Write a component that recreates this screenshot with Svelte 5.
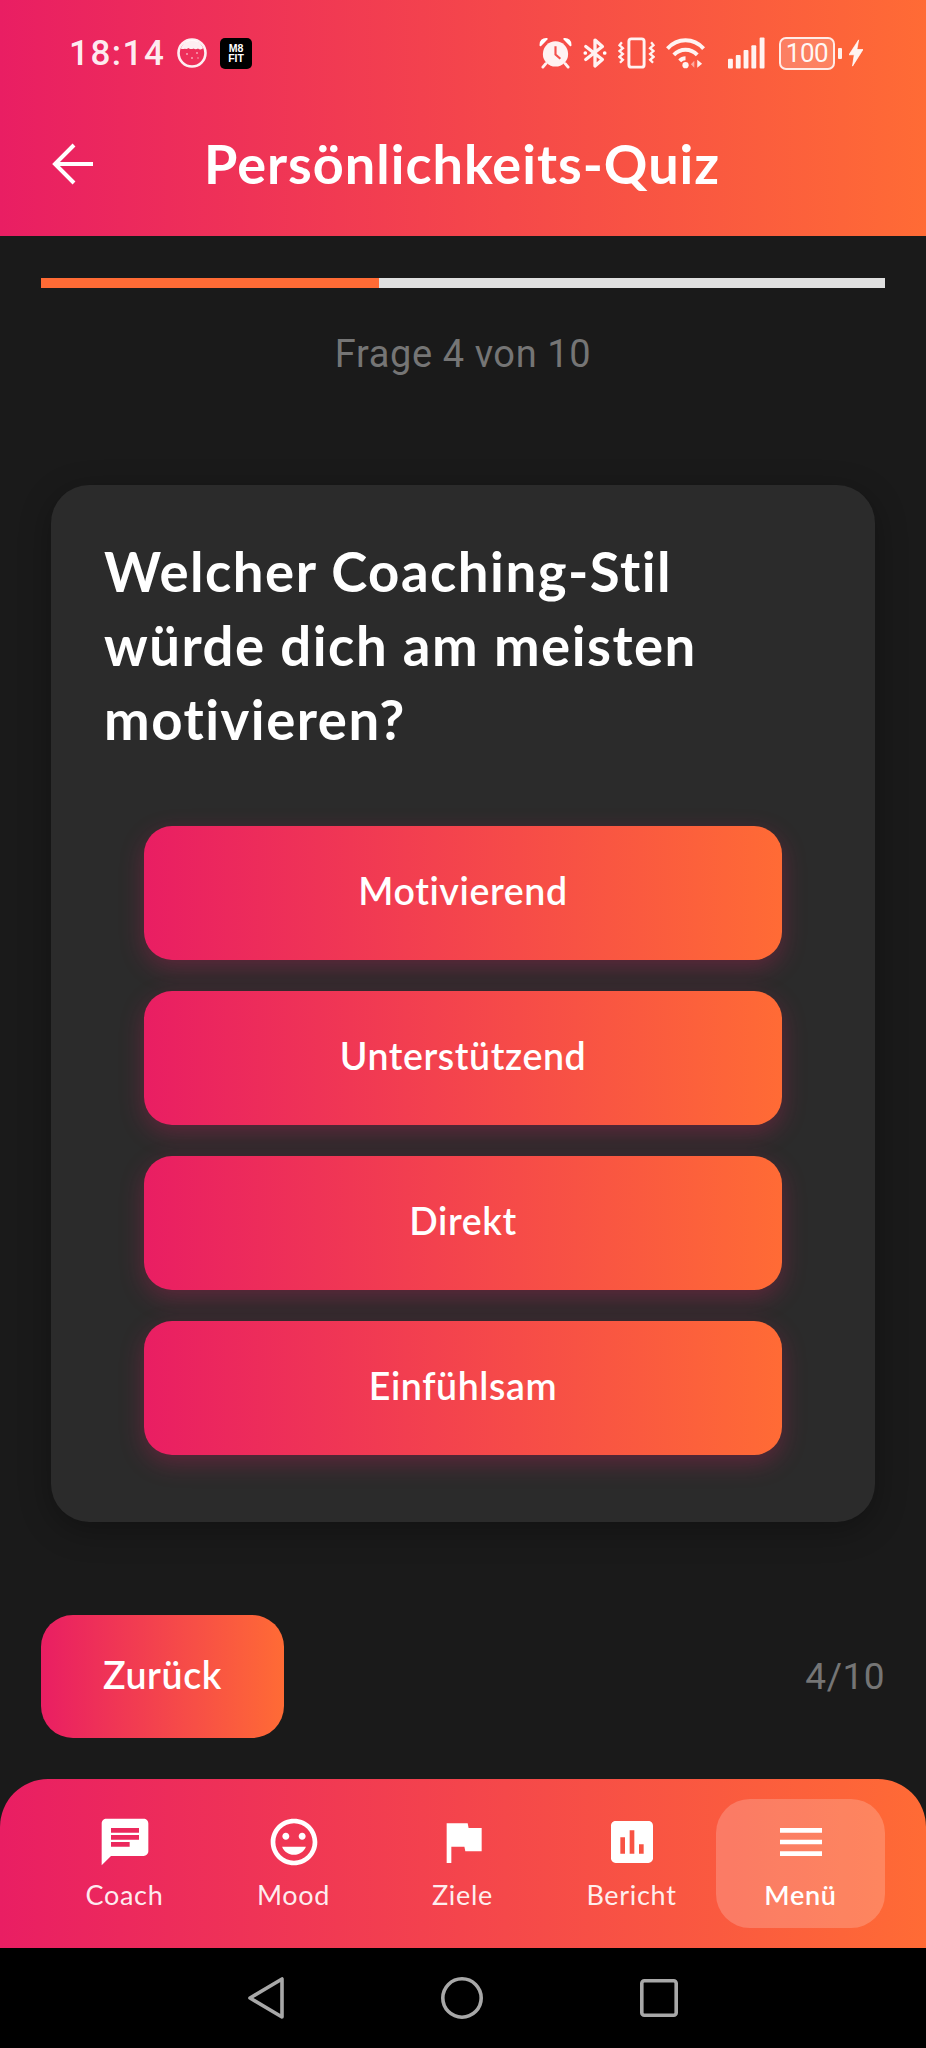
<script>
  const options = ['Motivierend', 'Unterstützend', 'Direkt', 'Einfühlsam'];
  const progress = 40;
</script>

<div class="screen">
  <header class="header">
    <div class="status">
      <div class="status-left">
        <span class="time">18:14</span>
        <svg class="ic-straw" viewBox="0 0 30 30"><circle cx="15" cy="15" r="13.500" fill="none" stroke="#fff" stroke-opacity=".92" stroke-width="2.600"/><path d="M4 10C6 5 10 2 15 2s9 3 11 8c-1.500 2-3.500 1.500-5 .5-1.500 1-3 1-4.500 0-2 1-4 .5-5-.5-1.500 1-2.500 1.500-3.500.5-.5.5-2 1-4.500 0z" fill="#fff" fill-opacity=".92"/><g fill="#fff" fill-opacity=".55"><circle cx="10" cy="16" r="1"/><circle cx="20" cy="15" r="1"/><circle cx="15" cy="20" r="1"/><circle cx="21" cy="20" r=".8"/></g></svg>
        <span class="m8"><span>M8</span><span>FIT</span></span>
      </div>
      <div class="status-right">
        <svg class="s-alarm" viewBox="0 0 34 32"><circle cx="17" cy="17" r="13" fill="#fff" fill-opacity=".93"/><path d="M17 9v8.500l5 4.500" fill="none" stroke="#f4504c" stroke-width="2.200"/><path d="M1.500 8 8 1.500C4 1.200 1 4 1.500 8zM32.500 8 26 1.500c4-.3 7 2.500 6.500 6.500z" fill="#fff" fill-opacity=".93" stroke="#fff" stroke-width="2" stroke-linejoin="round"/><path d="M7 27l-3 3.500M27 27l3 3.500" stroke="#fff" stroke-opacity=".93" stroke-width="3" stroke-linecap="round"/></svg>
        <svg class="s-bt" viewBox="0 0 26 32"><path d="M3 9l18 14-8 7V2l8 7L3 23" fill="none" stroke="#fff" stroke-opacity=".93" stroke-width="3.600" stroke-linejoin="round" stroke-linecap="round"/><circle cx="2.500" cy="16" r="2" fill="#fff"/><circle cx="23.500" cy="16" r="2" fill="#fff"/></svg>
        <svg class="s-vib" viewBox="0 0 38 32"><rect x="11.200" y="1.500" width="15.600" height="29" rx="2.500" fill="none" stroke="#fff" stroke-opacity=".93" stroke-width="3"/><path d="M4 5l-2.500 3L5 11l-3.500 3L5 17l-3.500 3L5 23l-3 3M34 5l2.500 3L33 11l3.500 3L33 17l3.500 3L33 23l3 3" fill="none" stroke="#fff" stroke-opacity=".93" stroke-width="2.400"/></svg>
        <svg class="s-wifi" viewBox="0 0 42 32"><g fill="none" stroke="#fff" stroke-opacity=".93" stroke-width="4"><path d="M1.500 11.500C6.500 6 13 3 20 3s13.500 3 18.500 8.500"/><path d="M8 18c3.300-3.500 7.500-5.300 12-5.300s8.700 1.800 12 5.300"/><path d="M14 24c1.700-1.800 3.700-2.700 6-2.700"/></g><circle cx="20" cy="28.500" r="3.200" fill="#fff" fill-opacity=".93"/><path d="M29 31v-7l-3.500 3.500z" fill="#fff" fill-opacity=".5"/><path d="M32 23v8l5-4z" fill="#fff" fill-opacity=".9"/></svg>
        <svg class="s-sig" viewBox="0 0 38 32"><g fill="#fff" fill-opacity=".93"><rect x="0" y="22" width="5" height="10" rx="1"/><rect x="8" y="18" width="5" height="14" rx="1"/><rect x="16" y="13" width="5" height="19" rx="1"/><rect x="24" y="8" width="5" height="24" rx="1"/><rect x="32.500" y="0" width="5" height="32" rx="1"/></g></svg>
        <span class="batt"><span class="batt-body">100</span><span class="batt-tip"></span></span>
        <svg class="s-bolt" viewBox="0 0 16 30"><path d="M11 0 0 17h6l-2 13L16 11H9z" fill="#fff" fill-opacity=".93" stroke="#fff" stroke-width=".8" stroke-linejoin="round"/></svg>
      </div>
    </div>
    <div class="toolbar">
      <svg class="back" viewBox="0 0 44 44"><path d="M42 22H5M23 3 4 22l19 19" fill="none" stroke="#fff" stroke-width="4"/></svg>
      <h1>Persönlichkeits-Quiz</h1>
    </div>
  </header>

  <main class="main">
    <div class="track"><div class="fill" style="width: {progress}%"></div></div>
    <p class="count">Frage 4 von 10</p>

    <section class="card">
      <h2>Welcher Coaching-Stil würde dich am meisten motivieren?</h2>
      <div class="options">
        {#each options as o}
          <button class="opt">{o}</button>
        {/each}
      </div>
    </section>

    <div class="foot">
      <button class="prev">Zurück</button>
      <span class="frac">4/10</span>
    </div>
  </main>

  <nav class="nav">
    <div class="item">
      <svg viewBox="0 0 24 24"><path d="M20 2H4c-1.100 0-1.990.9-1.990 2L2 22l4-4h14c1.100 0 2-.9 2-2V4c0-1.100-.9-2-2-2zM6 9h12v2H6V9zm8 5H6v-2h8v2zm4-6H6V6h12v2z" fill="#fff"/></svg>
      <span>Coach</span>
    </div>
    <div class="item">
      <svg viewBox="0 0 24 24"><path d="M11.990 2C6.470 2 2 6.480 2 12s4.470 10 9.990 10C17.520 22 22 17.520 22 12S17.520 2 11.990 2zM12 20c-4.420 0-8-3.580-8-8s3.580-8 8-8 8 3.580 8 8-3.580 8-8 8zm3.500-9c.83 0 1.500-.67 1.500-1.500S16.330 8 15.500 8 14 8.670 14 9.500s.67 1.500 1.500 1.500zm-7 0c.83 0 1.500-.67 1.500-1.500S9.330 8 8.500 8 7 8.670 7 9.500 7.670 11 8.500 11zm3.500 6.500c2.330 0 4.310-1.460 5.110-3.500H6.890c.8 2.040 2.780 3.500 5.110 3.500z" fill="#fff"/></svg>
      <span>Mood</span>
    </div>
    <div class="item">
      <svg viewBox="0 0 24 24"><path d="M14.400 6 14 4H5v17h2v-7h5.600l.4 2h7V6z" fill="#fff"/></svg>
      <span>Ziele</span>
    </div>
    <div class="item">
      <svg viewBox="0 0 24 24"><path d="M19 3H5c-1.100 0-2 .9-2 2v14c0 1.100.9 2 2 2h14c1.100 0 2-.9 2-2V5c0-1.100-.9-2-2-2zM9 17H7v-7h2v7zm4 0h-2V7h2v10zm4 0h-2v-4h2v4z" fill="#fff"/></svg>
      <span>Bericht</span>
    </div>
    <div class="item active">
      <svg viewBox="0 0 24 24"><path d="M3 18h18v-2H3v2zm0-5h18v-2H3v2zm0-7v2h18V6H3z" fill="#fff"/></svg>
      <span>Menü</span>
    </div>
  </nav>

  <div class="sysnav">
    <svg class="k-tri" viewBox="0 0 36 42"><path d="M34 2v38L2 21z" fill="none" stroke="#a8a8a8" stroke-width="3.600" stroke-linejoin="round"/></svg>
    <svg class="k-cir" viewBox="0 0 42 42"><circle cx="21" cy="21" r="19.200" fill="none" stroke="#a8a8a8" stroke-width="3.600"/></svg>
    <svg class="k-sq" viewBox="0 0 38 38"><rect x="1.800" y="1.800" width="34.400" height="34.400" rx="2.500" fill="none" stroke="#a8a8a8" stroke-width="3.600"/></svg>
  </div>
</div>

<style>
  :global(body) { margin: 0; background: #1a1a1a; }
  .screen {
    --grad: linear-gradient(90deg, #e91e63 0%, #ff6b35 100%);
    width: 926px; height: 2048px; display: flex; flex-direction: column;
    background: #1a1a1a; color: #fff; overflow: hidden;
    font-family: "Lato", "Noto Sans", sans-serif;
  }
  .header { height: 236px; flex: none; background: var(--grad); box-sizing: border-box; }
  .status { height: 106px; display: flex; justify-content: space-between; align-items: center; padding: 0 0 0 69px; box-sizing: border-box; }
  .status-left { display: flex; align-items: center; }
  .time { font: 500 35px/1 "Roboto", sans-serif; letter-spacing: 1.500px; color: rgba(255,255,255,.93); width: 100px; }
  .ic-straw { width: 30px; height: 30px; margin-left: 8px; }
  .m8 { width: 32px; height: 31px; margin-left: 13px; border-radius: 5px; background: #000; display: flex; flex-direction: column; align-items: center; justify-content: center; font: 700 10.500px/10px "Liberation Sans", sans-serif; }
  .status-right { display: flex; align-items: center; margin-right: 63px; height: 32px; }
  .status-right svg { height: 32px; flex: none; }
  .s-alarm { width: 33px; }
  .s-bt { width: 24px; margin-left: 11px; }
  .s-vib { width: 37px; margin-left: 11px; }
  .s-wifi { width: 41px; margin-left: 11px; }
  .s-sig { width: 37px; margin-left: 21px; }
  .batt { display: flex; align-items: center; margin-left: 14px; }
  .batt-body { width: 52px; height: 29px; border: 2.500px solid rgba(255,255,255,.85); border-radius: 7px; background: rgba(255,255,255,.2); display: flex; align-items: center; justify-content: center; font: 400 26px/1 "Roboto", sans-serif; color: rgba(255,255,255,.95); box-sizing: content-box; letter-spacing: -.5px; }
  .batt-tip { width: 4px; height: 11px; margin-left: 3px; border-radius: 1px; background: rgba(255,255,255,.9); }
  .s-bolt { width: 14px; margin-left: 7px; }

  .toolbar { display: flex; align-items: center; height: 116px; padding-left: 51px; }
  .back { width: 44px; height: 44px; flex: none; }
  h1 { margin: 0 0 0 109px; font-size: 54px; font-weight: 700; line-height: 1; letter-spacing: 1px; }

  .main { flex: 1; padding: 42px 41px 0; display: flex; flex-direction: column; box-sizing: border-box; }
  .track { height: 10px; background: #e0e0e0; flex: none; }
  .fill { height: 100%; background: #ff6b35; }
  .count { margin: 44px 0 0; text-align: center; font: 400 38px/1.2 "Roboto", sans-serif; color: #757575; letter-spacing: .6px; }
  .card { margin: 107px 10px 0; height: 1037px; box-sizing: border-box; background: #2b2b2b; border-radius: 38px; padding: 49px 53px 0; box-shadow: 0 8px 32px rgba(0,0,0,.3); flex: none; }
  h2 { margin: 0; font-size: 54.500px; font-weight: 700; line-height: 74px; max-width: 620px; letter-spacing: 1.500px; }
  .options { margin: 70px 40px 0; display: flex; flex-direction: column; gap: 31px; }
  button { border: 0; color: #fff; font-family: inherit; background: var(--grad); padding: 0 0 4px; }
  .opt { height: 134px; border-radius: 28px; font-size: 37.500px; font-weight: 600; letter-spacing: .6px; box-shadow: 0 8px 24px rgba(233,30,99,.28); }
  .foot { margin-top: 93px; display: flex; justify-content: space-between; align-items: center; }
  .prev { width: 243px; height: 123px; border-radius: 32px; font-size: 37.500px; font-weight: 600; letter-spacing: .6px; }
  .frac { font: 400 37px/1 "Roboto", sans-serif; color: #757575; letter-spacing: .5px; }

  .nav { height: 169px; flex: none; margin-top: auto; border-radius: 48px 48px 0 0; background: var(--grad); display: grid; grid-template-columns: repeat(5, 169px); padding: 20px 0 0 40px; box-sizing: border-box; }
  .item { height: 129px; border-radius: 34px; display: flex; flex-direction: column; align-items: center; padding-top: 15px; box-sizing: border-box; }
  .item svg { width: 56px; height: 56px; }
  .item span { margin-top: 9px; font: 400 27px/32px "Lato", sans-serif; color: rgba(255,255,255,.92); letter-spacing: .7px; }
  .active { background: rgba(255,255,255,.2); }
  .active span { font-weight: 600; color: #fff; }

  .sysnav { height: 100px; flex: none; background: #000; display: flex; align-items: center; justify-content: center; gap: 157px; }
  .k-tri { width: 36px; height: 42px; }
  .k-cir { width: 42px; height: 42px; }
  .k-sq { width: 38px; height: 38px; }
</style>
